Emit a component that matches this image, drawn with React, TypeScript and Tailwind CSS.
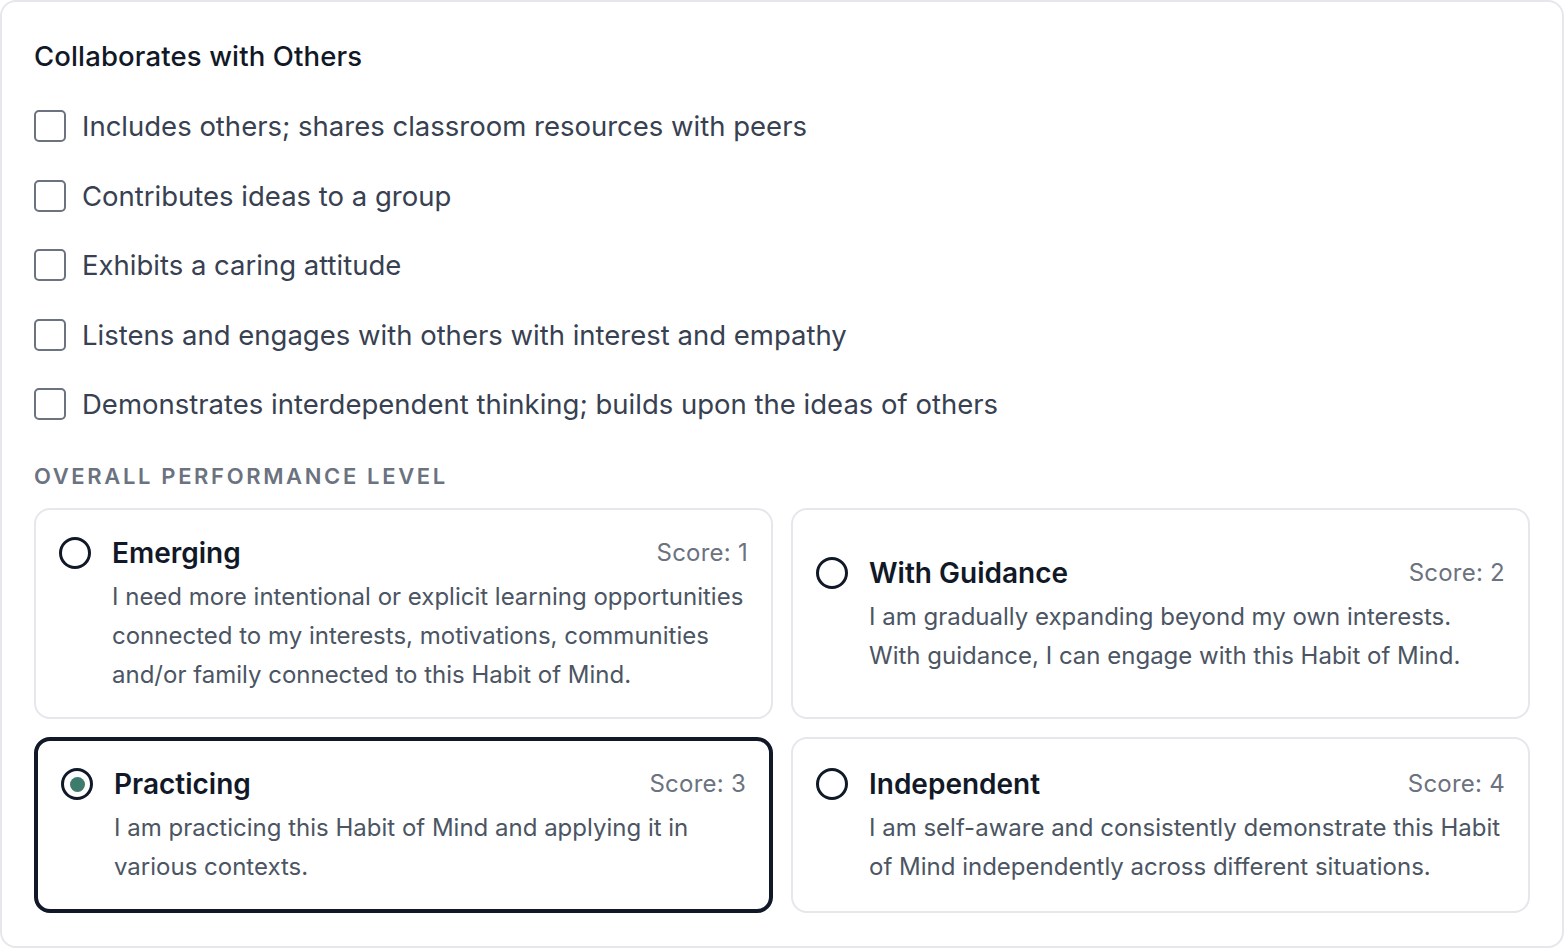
import { useState } from 'react';

interface Level {
    id: number;
    title: string;
    score: number;
    description: React.ReactNode;
}

const habits = [
    'Includes others; shares classroom resources with peers',
    'Contributes ideas to a group',
    'Exhibits a caring attitude',
    'Listens and engages with others with interest and empathy',
    'Demonstrates interdependent thinking; builds upon the ideas of others',
];

const levels: Level[] = [
    {
        id: 1,
        title: 'Emerging',
        score: 1,
        description:
            'I need more intentional or explicit learning opportunities connected to my interests, motivations, communities and/or family connected to this Habit of Mind.',
    },
    {
        id: 2,
        title: 'With Guidance',
        score: 2,
        description: (
            <>
                I am gradually expanding beyond my own interests.
                <br />
                With guidance, I can engage with this Habit of Mind.
            </>
        ),
    },
    {
        id: 3,
        title: 'Practicing',
        score: 3,
        description:
            'I am practicing this Habit of Mind and applying it in various contexts.',
    },
    {
        id: 4,
        title: 'Independent',
        score: 4,
        description:
            'I am self-aware and consistently demonstrate this Habit of Mind independently across different situations.',
    },
];

function Radio({ checked }: { checked: boolean }) {
    return (
        <span className="flex size-8 shrink-0 items-center justify-center rounded-full border-[3.5px] border-[#111827] bg-white">
            {checked && <span className="size-[15px] rounded-full bg-[#3d7b6a]" />}
        </span>
    );
}

export default function App() {
    const [checked, setChecked] = useState<boolean[]>(habits.map(() => false));
    const [level, setLevel] = useState(3);

    return (
        <div className="min-h-[948px] rounded-2xl border-2 border-[#e5e7eb] bg-white p-8 font-['Inter',sans-serif]">
            <h2 className="text-[27.5px] leading-[44px] font-medium tracking-[0.005em] text-[#111827]">
                Collaborates with Others
            </h2>

            <div className="mt-7 flex flex-col gap-[29.5px]">
                {habits.map((habit, i) => (
                    <label key={habit} className="flex h-10 cursor-pointer items-center gap-4">
                        <input
                            type="checkbox"
                            className="sr-only"
                            checked={checked[i]}
                            onChange={() =>
                                setChecked((prev) => prev.map((v, j) => (j === i ? !v : v)))
                            }
                        />
                        <span className="flex size-8 shrink-0 items-center justify-center rounded-[5px] border-2 border-[#6b7280] bg-white">
                            {checked[i] && (
                                <svg viewBox="0 0 16 16" className="size-5 text-[#111827]" fill="none" stroke="currentColor" strokeWidth={2.5}>
                                    <path d="M3 8.5l3 3 7-7" />
                                </svg>
                            )}
                        </span>
                        <span className="text-[27.5px] leading-10 text-[#374151]">{habit}</span>
                    </label>
                ))}
            </div>

            <p className="mt-9 text-[22px] leading-8 font-semibold tracking-[0.12em] text-[#6b7280] uppercase">
                Overall Performance Level
            </p>

            <div className="mt-4 grid grid-cols-2 gap-[18px]">
                {levels.map((l) => {
                    const selected = level === l.id;
                    return (
                        <button
                            key={l.id}
                            type="button"
                            onClick={() => setLevel(l.id)}
                            className={
                                selected
                                    ? 'flex items-center rounded-2xl border-4 border-[#111827] bg-white p-[23px] text-left'
                                    : 'flex items-center rounded-2xl border-2 border-[#e5e7eb] bg-white p-[23px] text-left'
                            }
                        >
                            <div className="flex w-full gap-[21px]">
                                <div className="flex h-10 items-center">
                                    <Radio checked={selected} />
                                </div>
                                <div className="min-w-0 flex-1">
                                    <div className="flex items-center justify-between">
                                        <span className="text-[28px] leading-10 font-semibold text-[#111827]">
                                            {l.title}
                                        </span>
                                        <span className="text-[24px] leading-10 tracking-[0.01em] text-[#6b7280]">
                                            Score: {l.score}
                                        </span>
                                    </div>
                                    <p className="mt-1 text-[24px] leading-[39px] text-[#4b5563]">
                                        {l.description}
                                    </p>
                                </div>
                            </div>
                        </button>
                    );
                })}
            </div>
        </div>
    );
}
